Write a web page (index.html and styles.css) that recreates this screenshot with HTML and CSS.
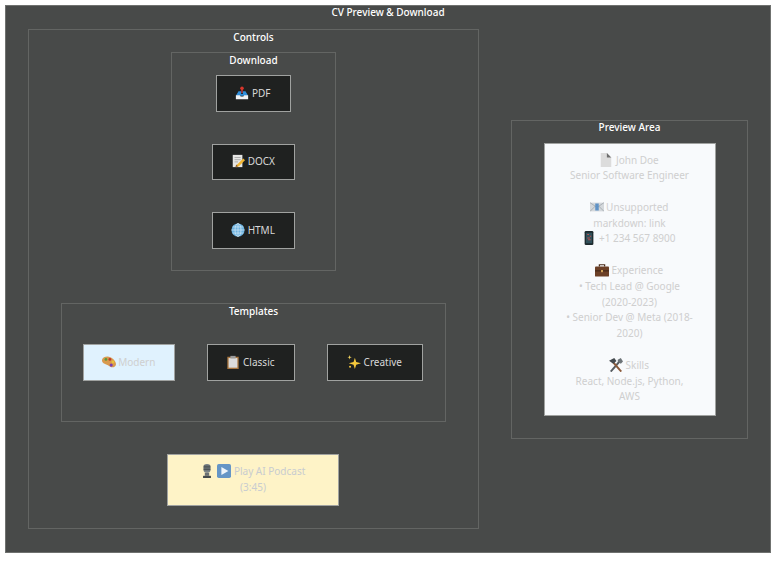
FILE: index.html
```html
<!DOCTYPE html>
<html lang="en">
<head>
  <meta charset="UTF-8" />
  <title>CV Preview &amp; Download</title>
  <link rel="stylesheet" href="styles.css">
</head>
<body>
  <main class="app">
    <h1 class="box-title app-title">CV Preview &amp; Download</h1>
    <div class="columns">
      <section class="box controls">
        <h2 class="box-title">Controls</h2>
        <section class="box download">
          <h3 class="box-title">Download</h3>
          <button class="btn btn-pdf">
            <svg class="icon" viewBox="0 0 16 16"><rect x="7" y="3" width="2" height="5" fill="#a33"/><circle cx="8" cy="2.6" r="2" fill="#d9362b"/><path d="M4 6h3v3h2V6h3l3 5H1z" fill="#2f8fdc"/><path d="M1 10.5h4.5l1 1.5h3l1-1.5H15V15H1z" fill="#f1f3f5"/></svg>
            PDF
          </button>
          <button class="btn btn-doc">
            <svg class="icon" viewBox="0 0 16 16"><rect x="2" y="1" width="11" height="14" fill="#e6e6e4"/><path d="M4 4h7M4 6.5h7M4 9h4" stroke="#a5a5a5"/><path d="M14 5l2 2-7 7-3 1 1-3z" fill="#f2b632"/><path d="M6 12l-1 3 3-1z" fill="#8a5a2b"/></svg>
            DOCX
          </button>
          <button class="btn btn-doc">
            <svg class="icon" viewBox="0 0 16 16"><circle cx="8" cy="8" r="7.5" fill="#6db3e0"/><g fill="none" stroke="#d3e8f5" stroke-width=".8"><ellipse cx="8" cy="8" rx="3.4" ry="7.5"/><path d="M8 .5v15M.5 8h15M2 4.5h12M2 11.5h12"/></g></svg>
            HTML
          </button>
        </section>
        <section class="box templates">
          <h3 class="box-title">Templates</h3>
          <div class="template-row">
            <button class="btn btn-modern">
              <svg class="icon" viewBox="0 0 16 16"><path d="M0 5.5C1 2 6 1 9.5 2.500c3.500 1.500 6.500 5 6.500 8 0 3-4 4.500-6.500 3-1.500-1-2-2-4-2.500C2 10.500-.5 8.500 0 5.500z" fill="#d99a4e"/><circle cx="4.5" cy="5" r="1.6" fill="#5b9a3c"/><circle cx="9" cy="5" r="1.6" fill="#c0392b"/><circle cx="12.5" cy="8" r="1.6" fill="#e8c33a"/><circle cx="10.5" cy="11.5" r="1.8" fill="#7a3fb0"/></svg>
              Modern
            </button>
            <button class="btn btn-classic">
              <svg class="icon" viewBox="0 0 16 16"><rect x="1.5" y="2" width="13" height="14" fill="#a9763f"/><rect x="3" y="3.5" width="10" height="11" fill="#dcdcdc"/><rect x="5" y="1" width="6" height="3" fill="#9a9a9a"/></svg>
              Classic
            </button>
            <button class="btn btn-creative">
              <svg class="icon" viewBox="0 0 16 16"><path d="M9 3l1.5 5L16 9.5 10.5 11 9 16l-1.5-5L2 9.5 7.5 8z" fill="#f6c93c"/><path d="M3 0l.6 1.900 1.900.6-1.900.6L3 5l-.6-1.900-1.900-.6 1.900-.6z" fill="#f6d860"/><circle cx="3.5" cy="13.5" r="1.100" fill="#f6c93c"/></svg>
              Creative
            </button>
          </div>
        </section>
        <button class="btn btn-podcast">
          <svg class="icon" viewBox="0 0 16 16"><rect x="4" y="0" width="8" height="10" rx="3.5" fill="#7c8488"/><path d="M4 2.5h8M4 4.5h8M4 6.5h8" stroke="#2b3033" stroke-width=".8"/><rect x="5.5" y="10" width="5" height="3.5" fill="#6a7074"/><rect x="3.5" y="13.5" width="9" height="2.5" fill="#454a4d"/></svg>
          <svg class="icon icon-play" viewBox="0 0 16 16"><rect x="0" y="0" width="16" height="16" rx="2" fill="#6595c6"/><path d="M5 3.5l8 4.500-8 4.500z" fill="#eef4fa"/></svg>
          Play AI Podcast<br>(3:45)
        </button>
      </section>
      <section class="box preview">
        <h2 class="box-title preview-title">Preview Area</h2>
        <article class="paper">
          <svg class="icon" viewBox="0 0 16 16"><path d="M2 0h7l5 5v11H2z" fill="#dcdcdc"/><path d="M9 0l5 5H9z" fill="#6e6e6e"/></svg>
          John Doe<br>
          Senior Software Engineer<br>
          <br>
          <svg class="icon" viewBox="0 0 16 16"><rect x="0" y="3" width="16" height="10" fill="#d4d8dc"/><path d="M0 3l8 5.500L16 3M0 13l6-6M16 13l-6-6" stroke="#8d959c" stroke-width=".7" fill="none"/><rect x="6" y="4" width="4" height="8" fill="#5f92c6"/></svg>
          Unsupported markdown: link<br>
          <svg class="icon" viewBox="0 0 16 16"><rect x="3" y="0" width="10" height="16" rx="1.5" fill="#1e2a2e"/><rect x="4.5" y="2" width="7" height="12" fill="#31505a"/><path d="M6 4h2M9 6h1.500M6 8h3M7 10h3" stroke="#d24e4e"/></svg>
          +1 234 567 8900<br>
          <br>
          <svg class="icon" viewBox="0 0 16 16"><path d="M5 4V2h6v2" fill="none" stroke="#4a2c1a" stroke-width="1.4"/><rect x="0" y="4" width="16" height="11.5" rx="1" fill="#6b3f26"/><path d="M0 9h16" stroke="#3a2114"/><rect x="7" y="8" width="2" height="2.5" fill="#e0b060"/></svg>
          Experience<br>
          • Tech Lead @ Google (2020-2023)<br>
          • Senior Dev @ Meta (2018-2020)<br>
          <br>
          <svg class="icon" viewBox="0 0 16 16"><path d="M2 15.5L12 4" stroke="#555b60" stroke-width="2.2"/><path d="M14 15.5L4 4" stroke="#8a5a3a" stroke-width="2.2"/><path d="M0 3l6-3 2.5 3.5-3.500 3z" fill="#444a4e"/><path d="M10 2l3.500-2L16 4l-2.500 2.500-3.500-2.500z" fill="#6d7478"/></svg>
          Skills<br>
          React, Node.js, Python, AWS
        </article>
      </section>
    </div>
  </main>
</body>
</html>
```

FILE: styles.css
```css
body {
  margin: 5px 13px 11px 5px;
  background-color: #ffffff;
  font-family: "Noto Sans", Arial, sans-serif;
  font-size: 10px;
  line-height: 15.8px;
}

.app {
  height: 548px;
  box-sizing: border-box;
  background-color: #484a49;
  border: 1px solid #6f716f;
  display: flex;
  flex-direction: column;
}

.box-title {
  margin: 0 0 8px;
  font-size: 10px;
  font-weight: 500;
  line-height: 14px;
  text-align: center;
  color: #ffffff;
}

.app-title {
  margin-bottom: 10px;
  line-height: 13px;
}

.preview-title {
  margin-bottom: 10px;
  line-height: 12px;
}

.columns {
  display: flex;
  align-items: center;
  gap: 32px;
  padding-left: 22px;
}

.box {
  box-sizing: border-box;
  border: 1px solid #636563;
  display: flex;
  flex-direction: column;
  align-items: center;
}

.controls {
  width: 451px;
  height: 500px;
}

.download {
  width: 165px;
  height: 219px;
  margin-bottom: 32px;
}

.download .btn {
  margin-bottom: 32px;
}

.download .btn:last-child {
  margin-bottom: 0;
}

.templates {
  width: 385px;
  height: 119px;
  margin-bottom: 32px;
}

.templates .box-title {
  margin-bottom: 26px;
}

.template-row {
  display: flex;
  gap: 32px;
  margin-right: 1px;
}

.btn {
  box-sizing: border-box;
  height: 36.5px;
  padding: 1px 0 0;
  background-color: #1f2120;
  border: 1px solid #a0a2a0;
  color: #d8d8d8;
  font: inherit;
  white-space: nowrap;
}

.btn-pdf {
  width: 75px;
}

.btn-doc {
  width: 83px;
}

.btn-modern {
  width: 92px;
  background-color: #e0f2fe;
  color: #cfcfcf;
}

.btn-classic {
  width: 88px;
}

.btn-creative {
  width: 96px;
}

.btn-podcast {
  width: 172px;
  height: 52px;
  margin-right: 1px;
  padding: 0 30px;
  background-color: #fef3c7;
  color: #c8ccd0;
  white-space: normal;
}

.icon {
  width: 14px;
  height: 14px;
  margin-left: -1px;
  vertical-align: -3px;
}

.icon-play {
  margin-left: 1px;
}

.preview {
  width: 237px;
  height: 319px;
}

.paper {
  box-sizing: border-box;
  width: 172px;
  height: 273px;
  padding: 9px 20px;
  background-color: #f8fafc;
  border: 1px solid #a0a2a0;
  color: #cfcfcf;
  text-align: center;
}
```
